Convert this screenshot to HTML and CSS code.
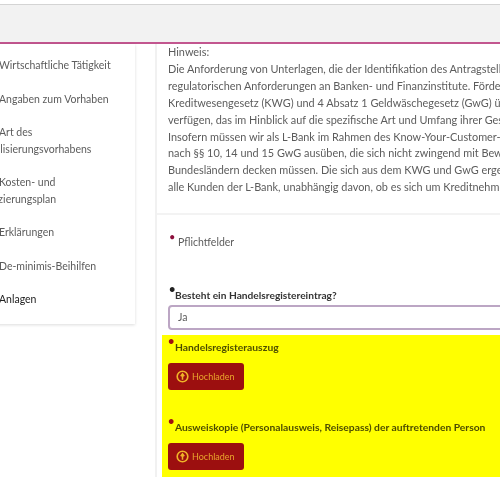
FILE: index.html
```html
<!DOCTYPE html>
<html lang="de">
<head>
<meta charset="utf-8">
<title>Anlagen</title>
<link rel="stylesheet" href="styles.css">
</head>
<body>
<div class="page">
  <header class="topbar"></header>
  <div class="columns">
    <nav class="sidebar">
      <a class="nav-item"><span class="nav-icon"></span>Wirtschaftliche Tätigkeit</a>
      <a class="nav-item"><span class="nav-icon"></span>Angaben zum Vorhaben</a>
      <a class="nav-item"><span class="nav-icon"></span>Art des<br>Digitalisierungsvorhabens</a>
      <a class="nav-item"><span class="nav-icon"></span>Kosten- und<br>Finanzierungsplan</a>
      <a class="nav-item"><span class="nav-icon"></span>Erklärungen</a>
      <a class="nav-item"><span class="nav-icon"></span>De-minimis-Beihilfen</a>
      <a class="nav-item active"><span class="nav-icon"></span>Anlagen</a>
    </nav>
    <main class="content">
      <section class="hint">
        Hinweis:<br>
        Die Anforderung von Unterlagen, die der Identifikation des Antragstellers dienen, beruht auf<br>
        regulatorischen Anforderungen an Banken- und Finanzinstitute. Förderbanken unterliegen<br>
        Kreditwesengesetz (KWG) und 4 Absatz 1 Geldwäschegesetz (GwG) über<br>
        verfügen, das im Hinblick auf die spezifische Art und Umfang ihrer Geschäfte<br>
        Insofern müssen wir als L-Bank im Rahmen des Know-Your-Customer-Prinzips<br>
        nach §§ 10, 14 und 15 GwG ausüben, die sich nicht zwingend mit Bewilligungen<br>
        Bundesländern decken müssen. Die sich aus dem KWG und GwG ergebenden<br>
        alle Kunden der L-Bank, unabhängig davon, ob es sich um Kreditnehmer handelt
      </section>
      <section class="form">
        <p class="required-note"><span class="star">•</span>Pflichtfelder</p>
        <label class="field-label"><span class="star dark">•</span>Besteht ein Handelsregistereintrag?</label>
        <div class="select">Ja</div>
        <div class="uploads">
          <div class="upload">
            <div class="upload-label"><span class="star">•</span>Handelsregisterauszug</div>
            <button class="upload-btn" type="button">
              <svg viewBox="0 0 12 12" width="13" height="13" aria-hidden="true"><circle cx="6" cy="6" r="4.9" fill="none" stroke="#f0b428" stroke-width="1.5"/><path d="M6 9V4.4M4.4 5.8 6 3.6l1.6 2.2" fill="none" stroke="#f0b428" stroke-width="1.4"/></svg>
              Hochladen
            </button>
          </div>
          <div class="upload">
            <div class="upload-label"><span class="star">•</span>Ausweiskopie (Personalausweis, Reisepass) der auftretenden Person</div>
            <button class="upload-btn" type="button">
              <svg viewBox="0 0 12 12" width="13" height="13" aria-hidden="true"><circle cx="6" cy="6" r="4.9" fill="none" stroke="#f0b428" stroke-width="1.5"/><path d="M6 9V4.4M4.4 5.8 6 3.6l1.6 2.2" fill="none" stroke="#f0b428" stroke-width="1.4"/></svg>
              Hochladen
            </button>
          </div>
        </div>
      </section>
    </main>
  </div>
</div>
</body>
</html>
```
FILE: styles.css
```css
* { box-sizing: border-box; }
html, body { margin: 0; height: 100%; overflow: hidden; background: #fff; }
.page {
  width: 500px;
  height: 500px;
  overflow: hidden;
  padding-top: 4px;
  font-family: Lato, "Open Sans", sans-serif;
  font-size: 10.5px;
  color: #5c5c5c;
  filter: blur(0.55px);
}
.topbar {
  height: 40px;
  background: #f2f2f2;
  border-top: 1px solid #d4d4d4;
  border-bottom: 2px solid #c2568f;
}
.columns { display: flex; align-items: flex-start; }
.sidebar {
  flex: 0 0 162px;
  margin-left: -27px;
  padding: 13px 8px 16px 0;
  background: #fff;
  box-shadow: 0 1px 3px rgba(0,0,0,.14);
  display: flex;
  flex-direction: column;
  gap: 17px;
  line-height: 16.5px;
}
.nav-item { display: block; }
.nav-icon { display: inline-block; width: 26px; }
.nav-item.active { color: #222; }
.content {
  flex: 0 0 auto;
  width: 345px;
  margin-left: 20px;
  border-left: 2px solid #f1f1f1;
  white-space: nowrap;
}
.hint {
  padding: 0 0 17px 11px;
  font-size: 10.9px;
  line-height: 16.9px;
  border-bottom: 2px solid #f3f3f3;
}
.form { padding-top: 20px; }
.star {
  position: absolute;
  left: -6px;
  top: -6px;
  font-size: 11px;
  color: #8c0f3c;
}
.star.dark { color: #222; }
.required-note {
  position: relative;
  margin: 0 0 40px 21px;
  line-height: 14px;
}
.required-note .star { left: -9px; top: -5px; }
.field-label {
  display: block;
  position: relative;
  margin: 0 0 4px 18px;
  font-weight: 700;
  font-size: 10.2px;
  line-height: 12px;
  color: #333;
}
.select {
  height: 25px;
  margin-left: 11px;
  width: 340px;
  padding: 0 0 0 8px;
  line-height: 21px;
  background: #fff;
  border: 2px solid #bca6c4;
  border-radius: 4px;
}
.uploads {
  margin: 5px 0 0 5px;
  padding: 6px 0 7px 6px;
  background: #ffff00;
  display: flex;
  flex-direction: column;
  gap: 31px;
}
.upload-label {
  position: relative;
  margin: 0 0 10px 7px;
  font-weight: 700;
  font-size: 10.3px;
  line-height: 12px;
  color: #4d4d00;
}
.upload-label .star { left: -7px; top: -6px; color: #a01010; }
.upload-btn {
  display: flex;
  align-items: center;
  gap: 3px;
  width: 76px;
  height: 27px;
  padding: 0 0 0 8px;
  border: 0;
  border-radius: 3px;
  background: #9c0f0f;
  color: #e8a52c;
  font-family: inherit;
  font-size: 9px;
}
```
